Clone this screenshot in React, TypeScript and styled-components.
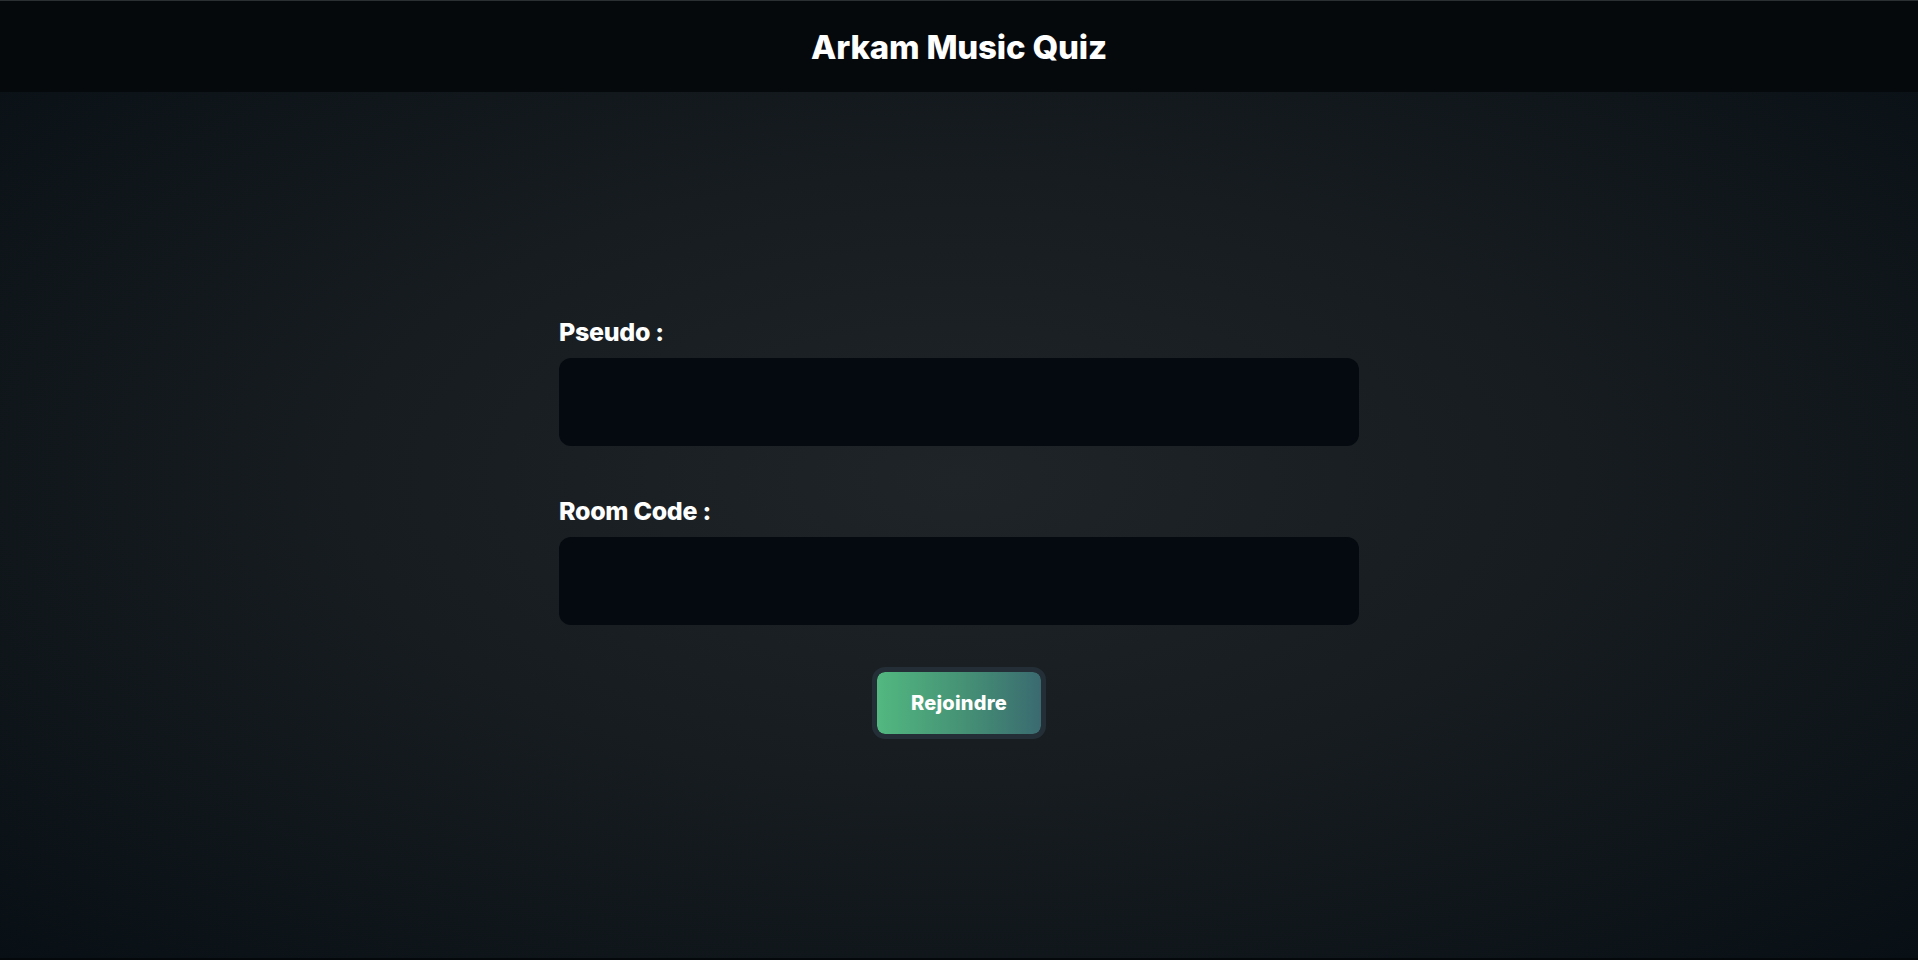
import React from "react";
import styled, { createGlobalStyle } from "styled-components";

const GlobalStyle = createGlobalStyle`
  html, body {
    margin: 0;
    padding: 0;
    background: #0a1015;
  }
  * {
    box-sizing: border-box;
  }
`;

const Page = styled.div`
  display: flex;
  flex-direction: column;
  min-height: 960px;
  font-family: Inter, "Open Sans", sans-serif;
  color: #fff;
  background: radial-gradient(ellipse at 50% 50%, #1f2428 0%, #161c20 45%, #091015 100%);
  border-bottom: 2px solid #05080b;
`;

const Header = styled.header`
  height: 92px;
  display: flex;
  align-items: center;
  justify-content: center;
  background: #06090c;
  border-top: 1px solid #2b3033;
`;

const Title = styled.h1`
  margin: 0;
  font-size: 33px;
  font-weight: 800;
  letter-spacing: -0.2px;
  color: #fff;
`;

const Main = styled.main`
  flex: 1;
  display: flex;
  align-items: center;
  justify-content: center;
`;

const Form = styled.form`
  width: 800px;
  display: flex;
  flex-direction: column;
  padding-top: 7px;
`;

const Field = styled.div<{ $last?: boolean }>`
  display: flex;
  flex-direction: column;
  margin-bottom: ${(p) => (p.$last ? "42px" : "51px")};
`;

const Label = styled.label`
  font-size: 25px;
  line-height: 28px;
  font-weight: 800;
  letter-spacing: -0.3px;
  margin-bottom: 12px;
`;

const Input = styled.input`
  height: 88px;
  border: none;
  border-radius: 12px;
  background: #040a10;
  color: #fff;
  font-size: 22px;
  padding: 0 24px;
  outline: none;
  font-family: inherit;
`;

const ButtonRow = styled.div`
  display: flex;
  justify-content: center;
`;

const JoinButton = styled.button`
  border: 5px solid #242e36;
  border-radius: 13px;
  padding: 19px 34px;
  background: linear-gradient(90deg, #52b880 0%, #459075 55%, #3a6a70 100%);
  background-clip: padding-box;
  color: #fff;
  font-family: inherit;
  font-size: 20px;
  line-height: 24px;
  font-weight: 800;
  letter-spacing: 0.2px;
  cursor: pointer;
`;

const App = () => {
  const [pseudo, setPseudo] = React.useState("");
  const [code, setCode] = React.useState("");

  return (
    <>
      <GlobalStyle />
      <Page>
        <Header>
          <Title>Arkam Music Quiz</Title>
        </Header>
        <Main>
          <Form onSubmit={(e) => e.preventDefault()}>
            <Field>
              <Label htmlFor="pseudo">Pseudo :</Label>
              <Input id="pseudo" value={pseudo} onChange={(e) => setPseudo(e.target.value)} />
            </Field>
            <Field $last>
              <Label htmlFor="code">Room Code :</Label>
              <Input id="code" value={code} onChange={(e) => setCode(e.target.value)} />
            </Field>
            <ButtonRow>
              <JoinButton type="submit">Rejoindre</JoinButton>
            </ButtonRow>
          </Form>
        </Main>
      </Page>
    </>
  );
};

export default App;
